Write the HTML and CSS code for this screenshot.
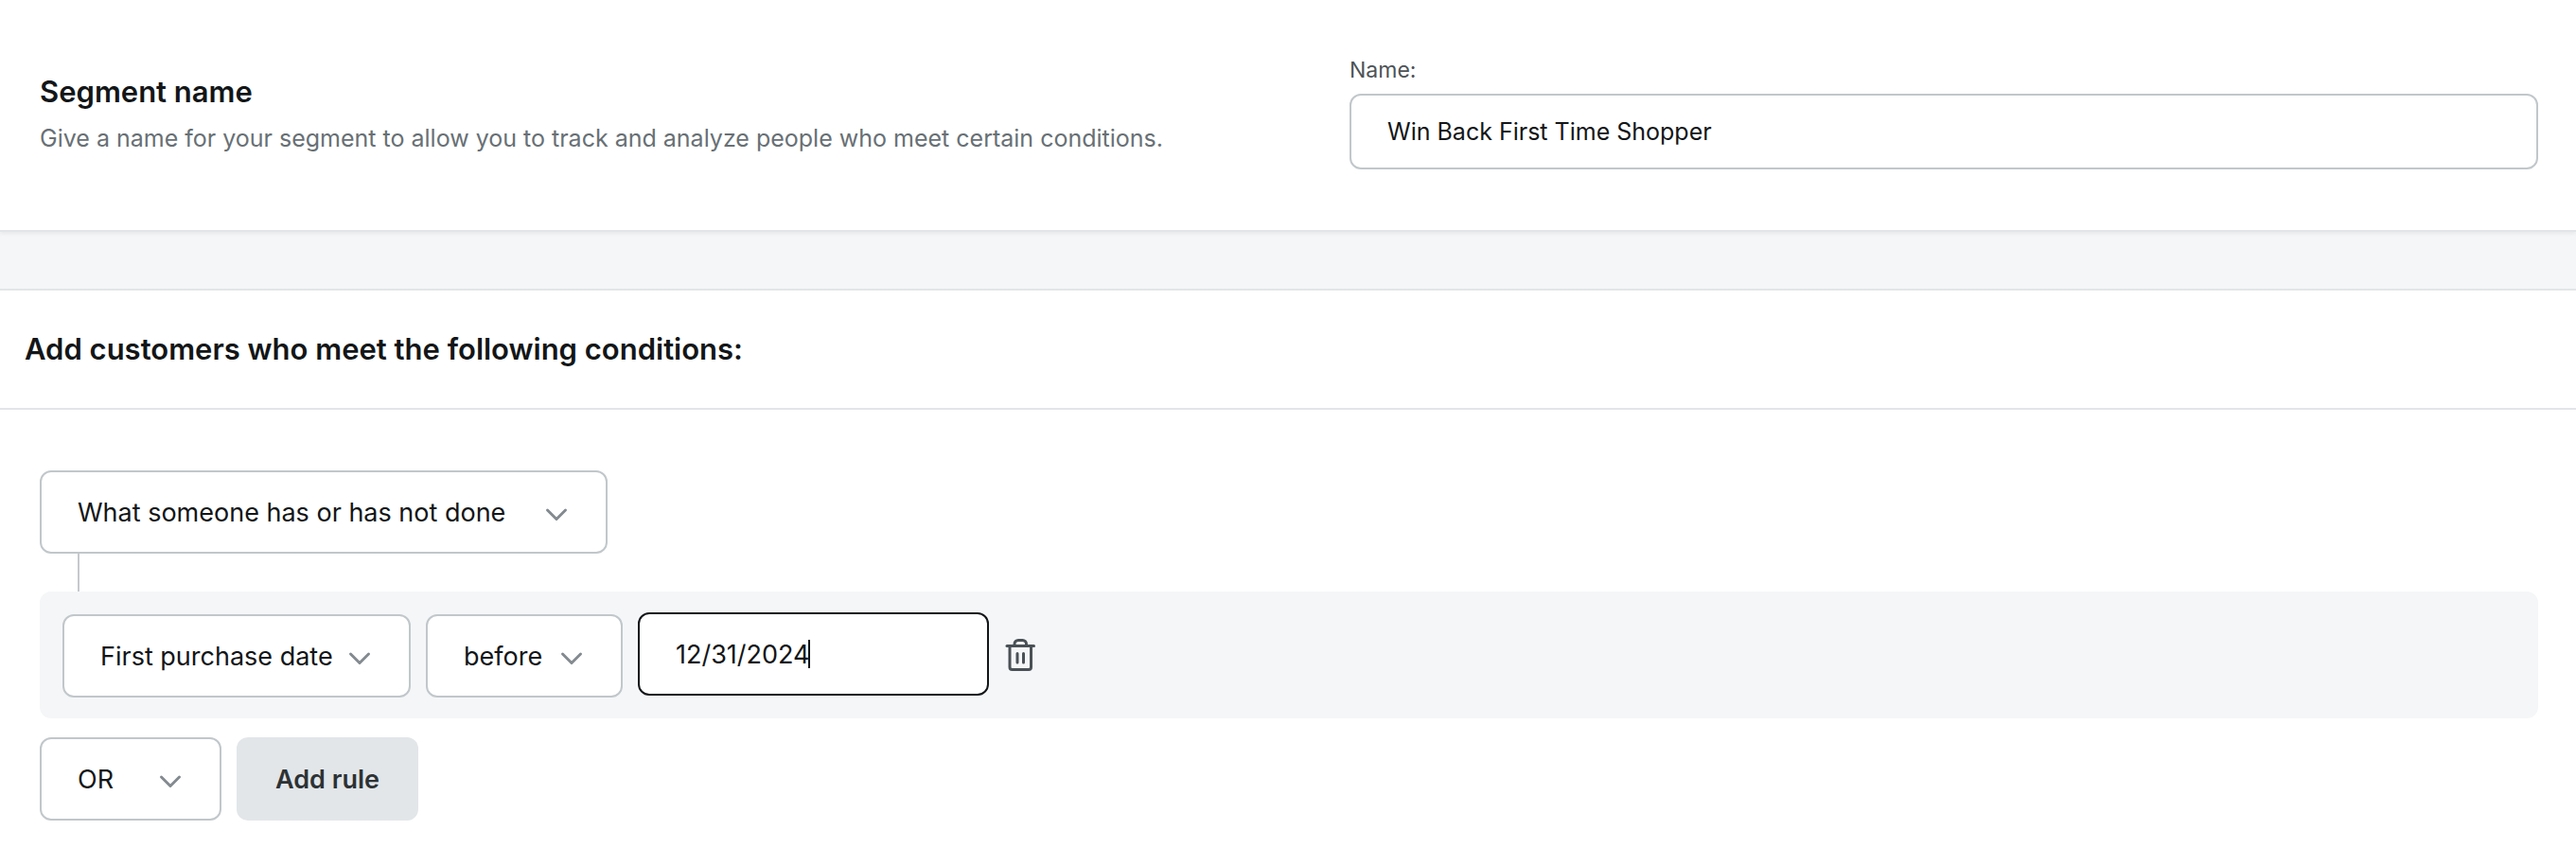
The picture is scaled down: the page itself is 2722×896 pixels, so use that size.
FILE: index.html
```html
<!DOCTYPE html>
<html lang="en">
<head>
  <meta charset="UTF-8" />
  <meta name="viewport" content="width=device-width, initial-scale=1.0"/>
  <title>Create Segment</title>
  <link rel="stylesheet" href="styles.css">
</head>
<body>
  <section class="panel name-panel">
    <div class="intro">
      <h2>Segment name</h2>
      <p>Give a name for your segment to allow you to track and analyze people who meet certain conditions.</p>
    </div>
    <div class="name-field">
      <label for="segment-name">Name:</label>
      <input type="text" id="segment-name" value="Win Back First Time Shopper" />
    </div>
  </section>

  <section class="panel conditions-panel">
    <header class="panel-header">
      <h2>Add customers who meet the following conditions:</h2>
    </header>

    <form class="conditions">
      <div class="select-box rule-type">
        <select aria-label="Condition type">
          <option>What someone has or has not done</option>
          <option>Properties about someone</option>
        </select>
        <svg class="chevron" viewBox="0 0 24 16"><path d="M2.500 3 L12 12.500 L21.500 3"/></svg>
      </div>
      <div class="connector"></div>

      <div class="rule">
        <div class="select-box rule-field">
          <select aria-label="Field">
            <option>First purchase date</option>
            <option>Last purchase date</option>
          </select>
          <svg class="chevron" viewBox="0 0 24 16"><path d="M2.500 3 L12 12.500 L21.500 3"/></svg>
        </div>
        <div class="select-box rule-operator">
          <select aria-label="Operator">
            <option>before</option>
            <option>after</option>
          </select>
          <svg class="chevron" viewBox="0 0 24 16"><path d="M2.500 3 L12 12.500 L21.500 3"/></svg>
        </div>
        <div class="date-box">
          <input type="text" class="active" aria-label="Date" value="12/31/2024" />
          <span class="caret"></span>
        </div>
        <button type="button" class="delete" aria-label="Delete rule">
          <svg viewBox="0 0 32 36">
            <path d="M2 8.500 H30.500"/>
            <path d="M10 8 V6.500 a4 4 0 0 1 4 -4 h4.500 a4 4 0 0 1 4 4 V8"/>
            <path d="M5 9 V31 a2.500 2.500 0 0 0 2.500 2.500 h17.500 a2.500 2.500 0 0 0 2.500 -2.500 V9"/>
            <path d="M13 16.500 V26 M19.500 16.500 V26"/>
          </svg>
        </button>
      </div>

      <div class="actions">
        <div class="select-box logic">
          <select aria-label="Join rules with">
            <option>OR</option>
            <option>AND</option>
          </select>
          <svg class="chevron" viewBox="0 0 24 16"><path d="M2.500 3 L12 12.500 L21.500 3"/></svg>
        </div>
        <button type="button" class="add-rule">Add rule</button>
      </div>
    </form>
  </section>
</body>
</html>
```
FILE: styles.css
```css
* {
  box-sizing: border-box;
}

body {
  margin: 0;
  font-family: Inter, "Liberation Sans", sans-serif;
  font-size: 27px;
  background: #f4f6f8;
  color: #131618;
}

h2, p {
  margin: 0;
}

h2 {
  font-size: 31px;
  line-height: 40px;
  font-weight: 600;
}

.panel {
  background: #fff;
}

.name-panel {
  display: grid;
  grid-template-columns: 1fr 1fr;
  align-items: center;
  gap: 128px;
  padding: 58px 40px 64px 42px;
  border-bottom: 2px solid #e2e5e8;
  box-shadow: 0 2px 4px rgba(0, 0, 0, 0.06);
}

.intro {
  padding-top: 6px;
}

.intro p {
  margin-top: 9px;
  font-size: 25px;
  line-height: 40px;
  color: #687075;
}

.name-field label {
  display: block;
  margin-bottom: 9px;
  font-size: 23px;
  line-height: 32px;
  color: #4c5357;
}

input, select {
  width: 100%;
  height: 88px;
  padding: 0 38px;
  font-family: inherit;
  font-size: 27px;
  color: #131618;
  background: #fff;
  border: 2px solid #c1c7ca;
  border-radius: 12px;
  outline: none;
}

select {
  display: block;
  appearance: none;
  cursor: pointer;
}

#segment-name {
  display: block;
  height: 80px;
  font-size: 25px;
}

.conditions-panel {
  margin-top: 60px;
  border-top: 2px solid #e2e5e8;
}

.panel-header {
  padding: 42px 26px;
  border-bottom: 2px solid #e2e5e8;
}

.conditions {
  padding: 64px 40px 29px 42px;
}

.select-box {
  position: relative;
}

.chevron {
  position: absolute;
  top: 39px;
  right: 42px;
  width: 24px;
  height: 16px;
  fill: none;
  stroke: #838b90;
  stroke-width: 3;
  stroke-linecap: round;
  stroke-linejoin: round;
  pointer-events: none;
}

.rule-type {
  width: 600px;
}

.connector {
  width: 2px;
  height: 40px;
  margin-left: 40px;
  background: #c6c9cb;
}

.rule {
  display: flex;
  align-items: flex-end;
  gap: 16px;
  padding: 22px 24px;
  background: #f4f6f8;
  border-radius: 12px;
}

.rule-field {
  width: 368px;
}

.rule-operator {
  width: 208px;
}

.date-box {
  position: relative;
  width: 371px;
  padding-bottom: 2px;
}

.date-box input {
  display: block;
}

input.active {
  border-color: #131618;
}

/* text cursor at the end of the date */
.caret {
  position: absolute;
  top: 29px;
  left: 180px;
  width: 2px;
  height: 30px;
  background: #131618;
}

.delete {
  align-self: center;
  display: flex;
  padding: 0 1px;
  background: none;
  border: none;
  cursor: pointer;
}

.delete svg {
  width: 32px;
  height: 36px;
  fill: none;
  stroke: #4a5156;
  stroke-width: 3;
  stroke-linecap: round;
  stroke-linejoin: round;
}

.actions {
  display: flex;
  gap: 16px;
  margin-top: 20px;
}

.logic {
  width: 192px;
}

.add-rule {
  min-width: 192px;
  padding: 0 40px;
  font-family: inherit;
  font-size: 27px;
  font-weight: 600;
  color: #2d3235;
  background: #e2e6e9;
  border: none;
  border-radius: 12px;
  cursor: pointer;
}
```
